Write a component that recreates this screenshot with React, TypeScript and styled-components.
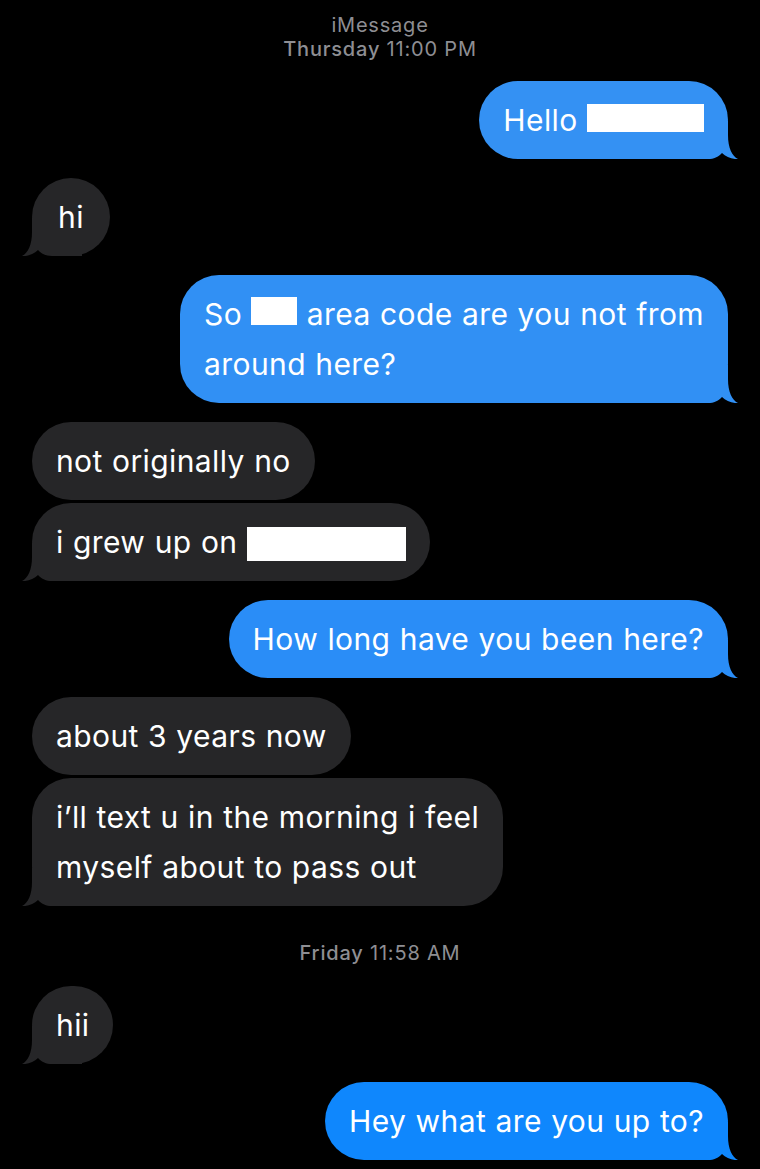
import * as React from 'react'
import styled, { createGlobalStyle } from 'styled-components'

const GlobalStyle = createGlobalStyle`
  html, body {
    margin: 0;
    padding: 0;
    background: #000;
  }
  body {
    font-family: Inter, "Noto Sans", "Liberation Sans", sans-serif;
    -webkit-font-smoothing: antialiased;
  }
`

const Thread = styled.div`
  width: 760px;
  min-height: 1169px;
  box-sizing: border-box;
  padding: 13px 32px 0;
  display: flex;
  flex-direction: column;
  background: #000;
`

const Stamp = styled.div<{ $top?: number }>`
  display: flex;
  flex-direction: column;
  align-items: center;
  margin-top: ${p => p.$top ?? 0}px;
  color: #8e8e93;
  font-size: 20px;
  line-height: 24px;
  font-weight: 400;
  letter-spacing: 0.8px;

  b {
    font-weight: 500;
  }
`

const Group = styled.div<{ $mine: boolean; $gap: number }>`
  display: flex;
  flex-direction: column;
  align-items: ${p => (p.$mine ? 'flex-end' : 'flex-start')};
  gap: 3px;
  margin-top: ${p => p.$gap}px;
`

const Bubble = styled.div<{ $tone: string }>`
  position: relative;
  isolation: isolate;
  box-sizing: border-box;
  min-width: 78px;
  padding: 14px 24px;
  border-radius: 39px;
  background: ${p => p.$tone};
  color: #fff;
  font-size: 30px;
  line-height: 50px;
  letter-spacing: 0.4px;
  word-spacing: 0.5px;
  text-align: center;
  white-space: nowrap;
`

const Line = styled.span`
  display: block;
  text-align: left;
`

const Tail = styled.svg<{ $mine: boolean }>`
  position: absolute;
  z-index: -1;
  bottom: 0;
  width: 60px;
  height: 44px;
  ${p => (p.$mine ? 'right: -10px;' : 'left: -10px; transform: scaleX(-1);')}
`

const Redact = styled.span<{ $w: number; $h: number; $drop?: number }>`
  display: inline-block;
  width: ${p => p.$w}px;
  height: ${p => p.$h}px;
  background: #fff;
  vertical-align: ${p => -(p.$drop ?? 0)}px;
`

const GREY = '#262628'

type Msg = {
  text: React.ReactNode
  tone?: string
}

function BubbleTail({ mine, tone }: { mine: boolean; tone: string }) {
  return (
    <Tail $mine={mine} viewBox="0 0 60 44">
      <path
        d="M0 6 H50 V20 C50 33 54 41 60 44 C54 44.5 48 42 44 38 C40 42 36 44 30 44 H0 Z"
        fill={tone}
      />
    </Tail>
  )
}

function MessageGroup({ mine, gap, items }: { mine: boolean; gap: number; items: Msg[] }) {
  return (
    <Group $mine={mine} $gap={gap}>
      {items.map((m, i) => {
        const tone = m.tone ?? GREY
        return (
          <Bubble key={i} $tone={tone}>
            {m.text}
            {i === items.length - 1 && <BubbleTail mine={mine} tone={tone} />}
          </Bubble>
        )
      })}
    </Group>
  )
}

export default function App() {
  return (
    <>
      <GlobalStyle />
      <Thread>
        <Stamp>
          <span>iMessage</span>
          <span><b>Thursday</b> 11:00 PM</span>
        </Stamp>

        <MessageGroup mine gap={20} items={[
          { text: <>Hello <Redact $w={117} $h={28} $drop={1} /></>, tone: '#3491f3' },
        ]} />
        <MessageGroup mine={false} gap={19} items={[{ text: 'hi' }]} />
        <MessageGroup mine gap={19} items={[
          {
            text: (
              <>
                <Line>So <Redact $w={46} $h={28} /> area code are you not from</Line>
                <Line>around here?</Line>
              </>
            ),
            tone: '#3190f4',
          },
        ]} />
        <MessageGroup mine={false} gap={19} items={[
          { text: 'not originally no' },
          { text: <>i grew up on <Redact $w={159} $h={34} $drop={8} /></> },
        ]} />
        <MessageGroup mine gap={19} items={[
          { text: 'How long have you been here?', tone: '#2a8df7' },
        ]} />
        <MessageGroup mine={false} gap={19} items={[
          { text: 'about 3 years now' },
          {
            text: (
              <>
                <Line>i’ll text u in the morning i feel</Line>
                <Line>myself about to pass out</Line>
              </>
            ),
          },
        ]} />

        <Stamp $top={35}>
          <span><b>Friday</b> 11:58 AM</span>
        </Stamp>

        <MessageGroup mine={false} gap={21} items={[{ text: 'hii' }]} />
        <MessageGroup mine gap={18} items={[
          { text: 'Hey what are you up to?', tone: '#0f87fd' },
        ]} />
      </Thread>
    </>
  )
}
